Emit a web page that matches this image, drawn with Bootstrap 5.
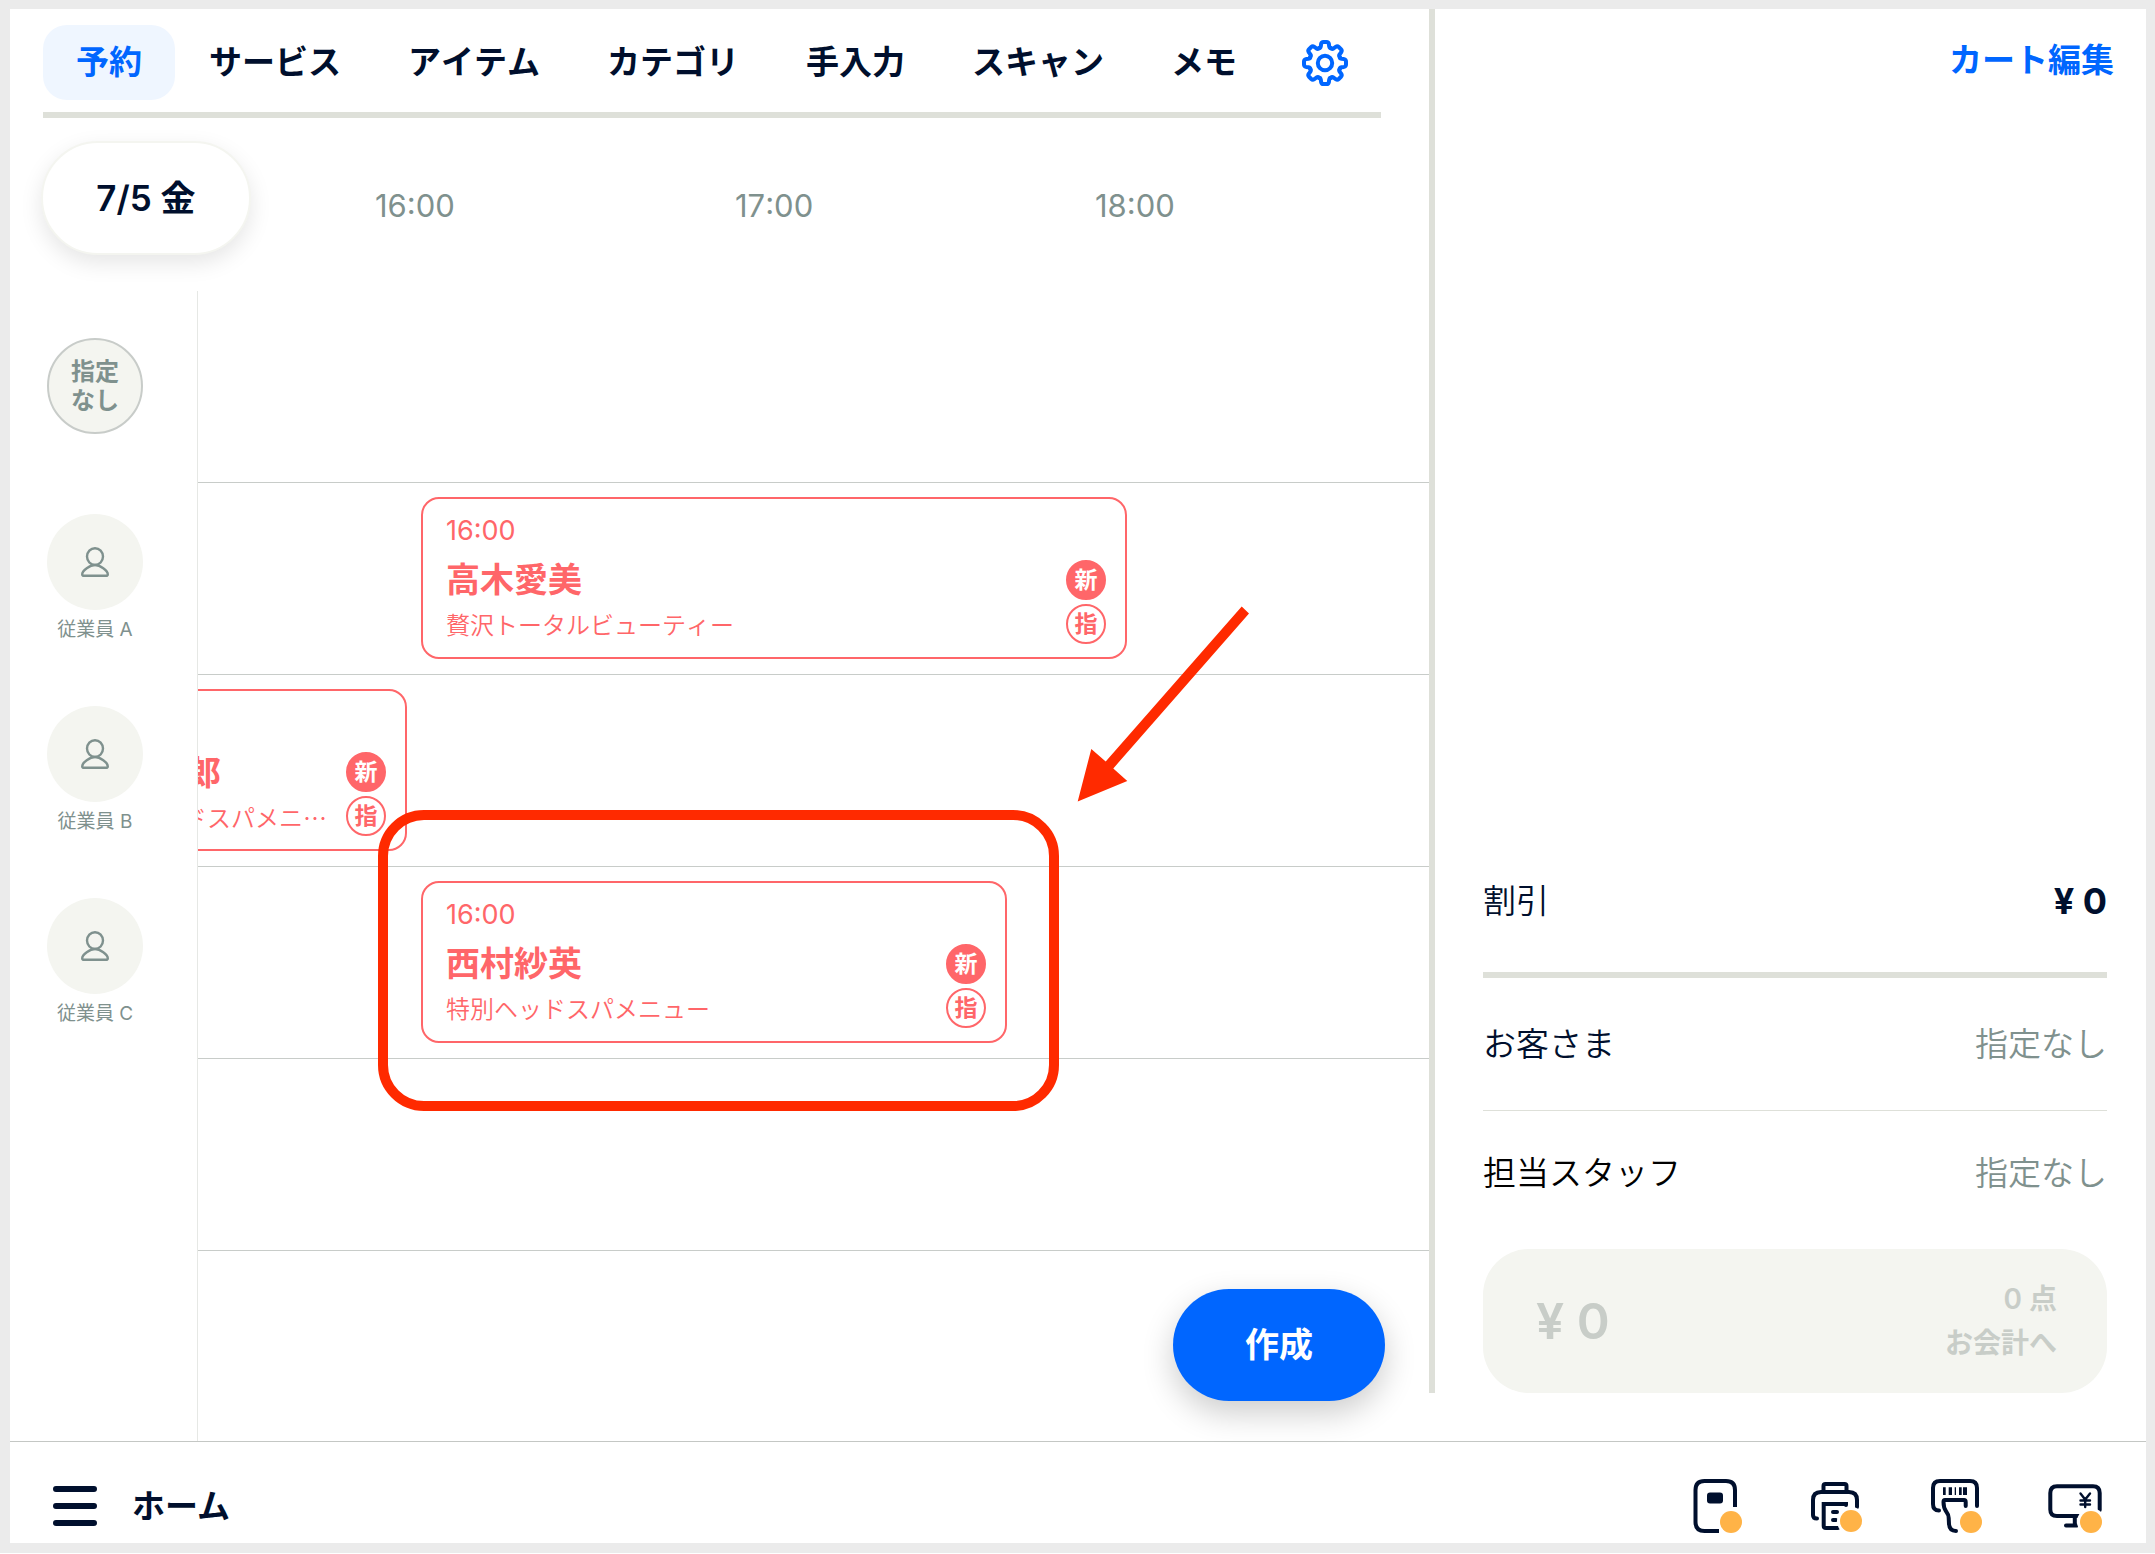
<!DOCTYPE html>
<html lang="ja">
<head>
<meta charset="utf-8">
<meta name="viewport" content="width=device-width, initial-scale=1">
<title>予約</title>
<link rel="stylesheet" href="https://cdn.jsdelivr.net/npm/bootstrap@5.3.0/dist/css/bootstrap.min.css">
<style>
:root{--ink:#000f2d;--blue:#0066ff;--rule:#dee0d9;--hair:#c8ccc9;--mute:#7f918e;--soft:#f4f5f0;--pink:#ff6669;--alert:#ff2a00}
body{font-family:Inter,"Noto Sans CJK JP",sans-serif;font-size:33px;line-height:40px;font-kerning:none;color:var(--ink);background:#fff;padding-bottom:1px}
button{font-family:inherit;color:inherit}
svg{display:block;flex:none}
.app-frame{background:#ebebeb;padding:9px 9px 10px 10px;min-height:calc(100vh - 1px)}
.pane-left{min-width:0}
.tab-strip{margin:16px 48px 0 33px;padding-bottom:12px;border-bottom:6px solid var(--rule);gap:1px}
.tab-strip .nav-link{padding:0 33px;height:75px;line-height:75px;color:var(--ink);font-weight:600;border-radius:24px;white-space:nowrap}
.tab-strip .nav-link.active{background:#eff6ff;color:var(--blue)}
.gear-btn{margin-left:31px}
.time-head{height:173px}
.date-btn{flex:none;width:210px;height:114px;margin:23px 0 0 31px;border:2px solid var(--soft);border-radius:57px;background:#fff;font-weight:600;font-size:35px;box-shadow:0 8px 22px rgba(0,0,0,.1)}
.hour-list{min-width:0;margin:68px 0 0 124px;color:var(--mute);font-size:31px}
.hour-list span{flex:0 0 360px}
.staff-col{width:188px;border-right:1px solid #e6e8e5;padding-left:37px}
.staff-cell{width:96px;height:192px;padding-top:31px}
.staff-cell.unassigned{padding-top:47px}
.staff-cell small{font-size:19px;line-height:40px;color:var(--mute);white-space:nowrap}
.face{width:96px;height:96px;background:var(--soft);color:var(--mute)}
.face.none{border:2px solid var(--hair);font-size:24px;line-height:29px;font-weight:600}
.lane{height:192px;border-bottom:1px solid var(--hair)}
.lane.last{height:190px;border-bottom:0}
.lanes{min-width:0}
.booking{position:absolute;top:14px;height:162px;border:2px solid var(--pink);border-radius:18px;background:#fff;color:var(--pink);padding:12px 19px 13px 23px;text-align:left}
.booking .at{font-size:27px;height:40px}
.booking .who{font-size:34px;font-weight:700;line-height:57px}
.booking .menu-name{font-family:"Noto Sans CJK JP",sans-serif;font-size:24px;line-height:32px;margin-bottom:3px;font-weight:350;white-space:nowrap}
.tag{width:40px;height:40px;border:2px solid var(--pink);font-size:23px;font-weight:700;line-height:36px}
.tag.fresh{background:var(--pink);color:#fff}
.callout{position:absolute;left:180px;top:519px;width:681px;height:301px;border:10px solid var(--alert);border-radius:46px;pointer-events:none}
.arrow{position:absolute;left:877px;top:312px;pointer-events:none}
.create-btn{position:absolute;right:44px;bottom:40px;width:212px;height:112px;border:0;border-radius:56px;background:var(--blue);color:#fff;font-size:34px;font-weight:600;box-shadow:0 12px 32px rgba(0,0,0,.2)}
.pane-right{flex:0 0 calc(100% / 3 + 5px);border-left:6px solid var(--rule);margin-bottom:48px;padding:0 39px 0 48px}
.cart-link{color:var(--blue);font-weight:600;text-decoration:none;margin:31px -7px 0 0}
.sum-row{font-weight:350}
.sum-row .val{color:var(--mute)}
.sum-row .money{font-size:36px;font-weight:700}
.sum-row.discount{height:148px;border-bottom:6px solid var(--rule)}
.sum-row.client{height:133px;border-bottom:1px solid var(--rule)}
.sum-row.person{height:138px;padding-bottom:15px;color:#000}
.pay-btn{height:144px;border:0;border-radius:46px;background:var(--soft);padding:0 50px 0 53px;font-weight:600}
.pay-btn,.pay-btn:disabled{color:#c8cdc8}
.pay-btn .total{font-size:50px}
.pay-btn .next{font-size:28px;line-height:44px}
.foot-bar{height:102px;border-top:1px solid #c4c7c4;padding:26px 41px 0 43px}
.foot-bar .home{font-weight:600;gap:35px;margin-top:18px}
.devices{gap:60px;margin-top:8px}
.plain{background:none;border:0;padding:0}
</style>
<script src="https://cdn.jsdelivr.net/npm/bootstrap@5.3.0/dist/js/bootstrap.bundle.min.js"></script>
</head>
<body>
<div class="app-frame d-flex flex-column">
<div class="d-flex flex-column flex-grow-1 bg-white">
  <main class="d-flex flex-grow-1">
    <section class="pane-left flex-grow-1 d-flex flex-column position-relative">
      <nav class="tab-strip nav flex-nowrap align-items-center">
        <a class="nav-link active" href="#">予約</a>
        <a class="nav-link" href="#">サービス</a>
        <a class="nav-link" href="#">アイテム</a>
        <a class="nav-link" href="#">カテゴリ</a>
        <a class="nav-link" href="#">手入力</a>
        <a class="nav-link" href="#">スキャン</a>
        <a class="nav-link" href="#">メモ</a>
        <button class="gear-btn plain" type="button" aria-label="設定">
          <svg width="46" height="46" viewBox="-23 -23 46 46" fill="none" stroke="#0066ff" stroke-width="4" stroke-linejoin="round" stroke-linecap="round">
            <defs><path id="tooth" d="M-6.1-14.8Q-4.6-14.6-4.2-16.6L-3.9-19Q-3.5-21-1.600-21H1.600Q3.500-21 3.900-19L4.200-16.600Q4.600-14.600 6.100-14.800"/></defs>
            <use href="#tooth"/><use href="#tooth" transform="rotate(45)"/><use href="#tooth" transform="rotate(90)"/><use href="#tooth" transform="rotate(135)"/><use href="#tooth" transform="rotate(180)"/><use href="#tooth" transform="rotate(225)"/><use href="#tooth" transform="rotate(270)"/><use href="#tooth" transform="rotate(315)"/>
            <circle r="7.2"/>
          </svg>
        </button>
      </nav>
      <div class="time-head d-flex align-items-start">
        <button class="date-btn" type="button">7/5 金</button>
        <div class="hour-list d-flex overflow-hidden"><span>16:00</span><span>17:00</span><span>18:00</span></div>
      </div>
      <div class="d-flex flex-grow-1">
        <div class="staff-col flex-shrink-0">
          <div class="staff-cell unassigned"><div class="face none rounded-circle d-flex align-items-center justify-content-center text-center">指定<br>なし</div></div>
          <div class="staff-cell text-center">
            <div class="face rounded-circle d-flex align-items-center justify-content-center">
              <svg width="28" height="30" viewBox="0 0 28 30" fill="none" stroke="currentColor" stroke-width="2.4" stroke-linejoin="round"><ellipse cx="14" cy="9.6" rx="8" ry="8.4"/><path d="M14 18C9 18 1.200 23.500 1.200 27.200Q1.200 28.800 3 28.800H25Q26.800 28.800 26.800 27.200C26.800 23.500 19 18 14 18Z"/></svg>
            </div><small class="d-block">従業員 A</small>
          </div>
          <div class="staff-cell text-center">
            <div class="face rounded-circle d-flex align-items-center justify-content-center">
              <svg width="28" height="30" viewBox="0 0 28 30" fill="none" stroke="currentColor" stroke-width="2.4" stroke-linejoin="round"><ellipse cx="14" cy="9.6" rx="8" ry="8.4"/><path d="M14 18C9 18 1.200 23.500 1.200 27.200Q1.200 28.800 3 28.800H25Q26.800 28.800 26.800 27.200C26.800 23.500 19 18 14 18Z"/></svg>
            </div><small class="d-block">従業員 B</small>
          </div>
          <div class="staff-cell text-center">
            <div class="face rounded-circle d-flex align-items-center justify-content-center">
              <svg width="28" height="30" viewBox="0 0 28 30" fill="none" stroke="currentColor" stroke-width="2.4" stroke-linejoin="round"><ellipse cx="14" cy="9.6" rx="8" ry="8.4"/><path d="M14 18C9 18 1.200 23.500 1.200 27.200Q1.200 28.800 3 28.800H25Q26.800 28.800 26.800 27.200C26.800 23.500 19 18 14 18Z"/></svg>
            </div><small class="d-block">従業員 C</small>
          </div>
        </div>
        <div class="lanes position-relative flex-grow-1 overflow-hidden">
          <div class="lane"></div>
          <div class="lane position-relative">
            <div class="booking d-flex justify-content-between" style="left:223px;width:706px">
              <div><div class="at">16:00</div><div class="who">高木愛美</div><div class="menu-name">贅沢トータルビューティー</div></div>
              <div class="d-flex flex-column justify-content-end gap-1 text-center"><span class="tag fresh rounded-circle">新</span><span class="tag rounded-circle">指</span></div>
            </div>
          </div>
          <div class="lane position-relative">
            <div class="booking d-flex justify-content-between" style="left:-40px;width:249px">
              <div class="d-flex flex-column justify-content-end"><div class="who ps-1">郎</div><div class="menu-name">ドスパメニ…</div></div>
              <div class="d-flex flex-column justify-content-end gap-1 text-center"><span class="tag fresh rounded-circle">新</span><span class="tag rounded-circle">指</span></div>
            </div>
          </div>
          <div class="lane position-relative">
            <div class="booking d-flex justify-content-between" style="left:223px;width:586px">
              <div><div class="at">16:00</div><div class="who">西村紗英</div><div class="menu-name">特別ヘッドスパメニュー</div></div>
              <div class="d-flex flex-column justify-content-end gap-1 text-center"><span class="tag fresh rounded-circle">新</span><span class="tag rounded-circle">指</span></div>
            </div>
          </div>
          <div class="lane"></div>
          <div class="lane last"></div>
          <div class="callout"></div>
          <svg class="arrow" width="180" height="204" viewBox="0 0 180 204" fill="#ff2a00"><path d="M166.700 3.500L174 10.400L38.300 165.400L52.300 178L2.700 198.400L16.300 146L30.700 158.500Z"/></svg>
        </div>
      </div>
      <button class="create-btn" type="button">作成</button>
    </section>
    <aside class="pane-right d-flex flex-column">
      <a class="cart-link align-self-end" href="#">カート編集</a>
      <div class="mt-auto">
        <div class="sum-row discount d-flex justify-content-between align-items-center"><span>割引</span><span class="money">¥ 0</span></div>
        <div class="sum-row client d-flex justify-content-between align-items-center"><span>お客さま</span><span class="val">指定なし</span></div>
        <div class="sum-row person d-flex justify-content-between align-items-center"><span>担当スタッフ</span><span class="val">指定なし</span></div>
        <button class="pay-btn w-100 d-flex justify-content-between align-items-center" type="button" disabled>
          <span class="total">¥ 0</span><span class="next text-end">0 点<br>お会計へ</span>
        </button>
      </div>
    </aside>
  </main>
  <footer class="foot-bar d-flex justify-content-between">
    <button class="home plain d-flex align-items-center align-self-start" type="button">
      <svg width="44" height="40" viewBox="0 0 44 40" stroke="#000f2d" stroke-width="6" stroke-linecap="round"><path d="M3 3H41M3 20H41M3 37H41"/></svg>ホーム</button>
    <div class="devices d-flex align-items-start">
      <svg width="60" height="60" viewBox="0 0 60 60" fill="none" stroke="#000f2d" stroke-width="4"><path d="M50 31V14Q50 5 41 5H19.500Q10.500 5 10.500 14V46Q10.500 55 19.500 55H34"/><rect x="22" y="16.500" width="16" height="11" rx="3" fill="#000f2d" stroke="none"/><circle cx="46" cy="46" r="14" fill="#fff" stroke="none"/><circle cx="46" cy="46" r="11" fill="#ffb347" stroke="none"/></svg>
      <svg width="60" height="60" viewBox="0 0 60 60" fill="none" stroke="#000f2d" stroke-width="4" stroke-linecap="round"><path d="M18.500 15V10Q18.500 8 20.500 8H39.500Q41.500 8 41.500 10V15M12 42.500Q8 42.500 8 39V24Q8 16 16 16H44Q52 16 52 24V31M41 29V28H18.700V50Q18.700 52 21 52H33M28 36H32M28 44H31"/><circle cx="46" cy="45" r="14" fill="#fff" stroke="none"/><circle cx="46" cy="45" r="11" fill="#ffb347" stroke="none"/></svg>
      <svg width="60" height="60" viewBox="0 0 60 60" fill="none" stroke="#000f2d" stroke-width="4" stroke-linecap="round"><path d="M14 34.500Q8 34.500 8 28V12Q8 5 15 5H45Q52 5 52 12V30M40.700 30V26Q40.700 24 39 24H20Q18.500 24 18.500 26C18.500 32 19.500 33 21.500 36C23.500 38.500 23.700 39 23.700 42L24 48Q24.500 55 31 55"/><path d="M18 11.300h2.700V19H18ZM23.700 11.300H27V19h-3.300ZM29.700 11.300H31V19h-1.300ZM34 11.300h2.700V19H34ZM38 11.300h4V19h-4Z" fill="#000f2d" stroke="none"/><circle cx="46" cy="46" r="14" fill="#fff" stroke="none"/><circle cx="46" cy="46" r="11" fill="#ffb347" stroke="none"/></svg>
      <svg width="60" height="60" viewBox="0 0 60 60" fill="none" stroke="#000f2d" stroke-width="4" stroke-linecap="round"><path d="M54.700 34V17Q54.700 10.300 48 10.300H12Q5.300 10.300 5.300 17V33.500Q5.300 40 12 40H34M29.800 40V49.500M21 49.500H32"/><path d="M35.500 17.500L40.200 23.500L45 17.500M40.200 23.500V31M35.500 24.500H45M35.500 28.500H45" stroke-width="2.400"/><circle cx="46" cy="46" r="14" fill="#fff" stroke="none"/><circle cx="46" cy="46" r="11" fill="#ffb347" stroke="none"/></svg>
    </div>
  </footer>
</div>
</div>
</body>
</html>
